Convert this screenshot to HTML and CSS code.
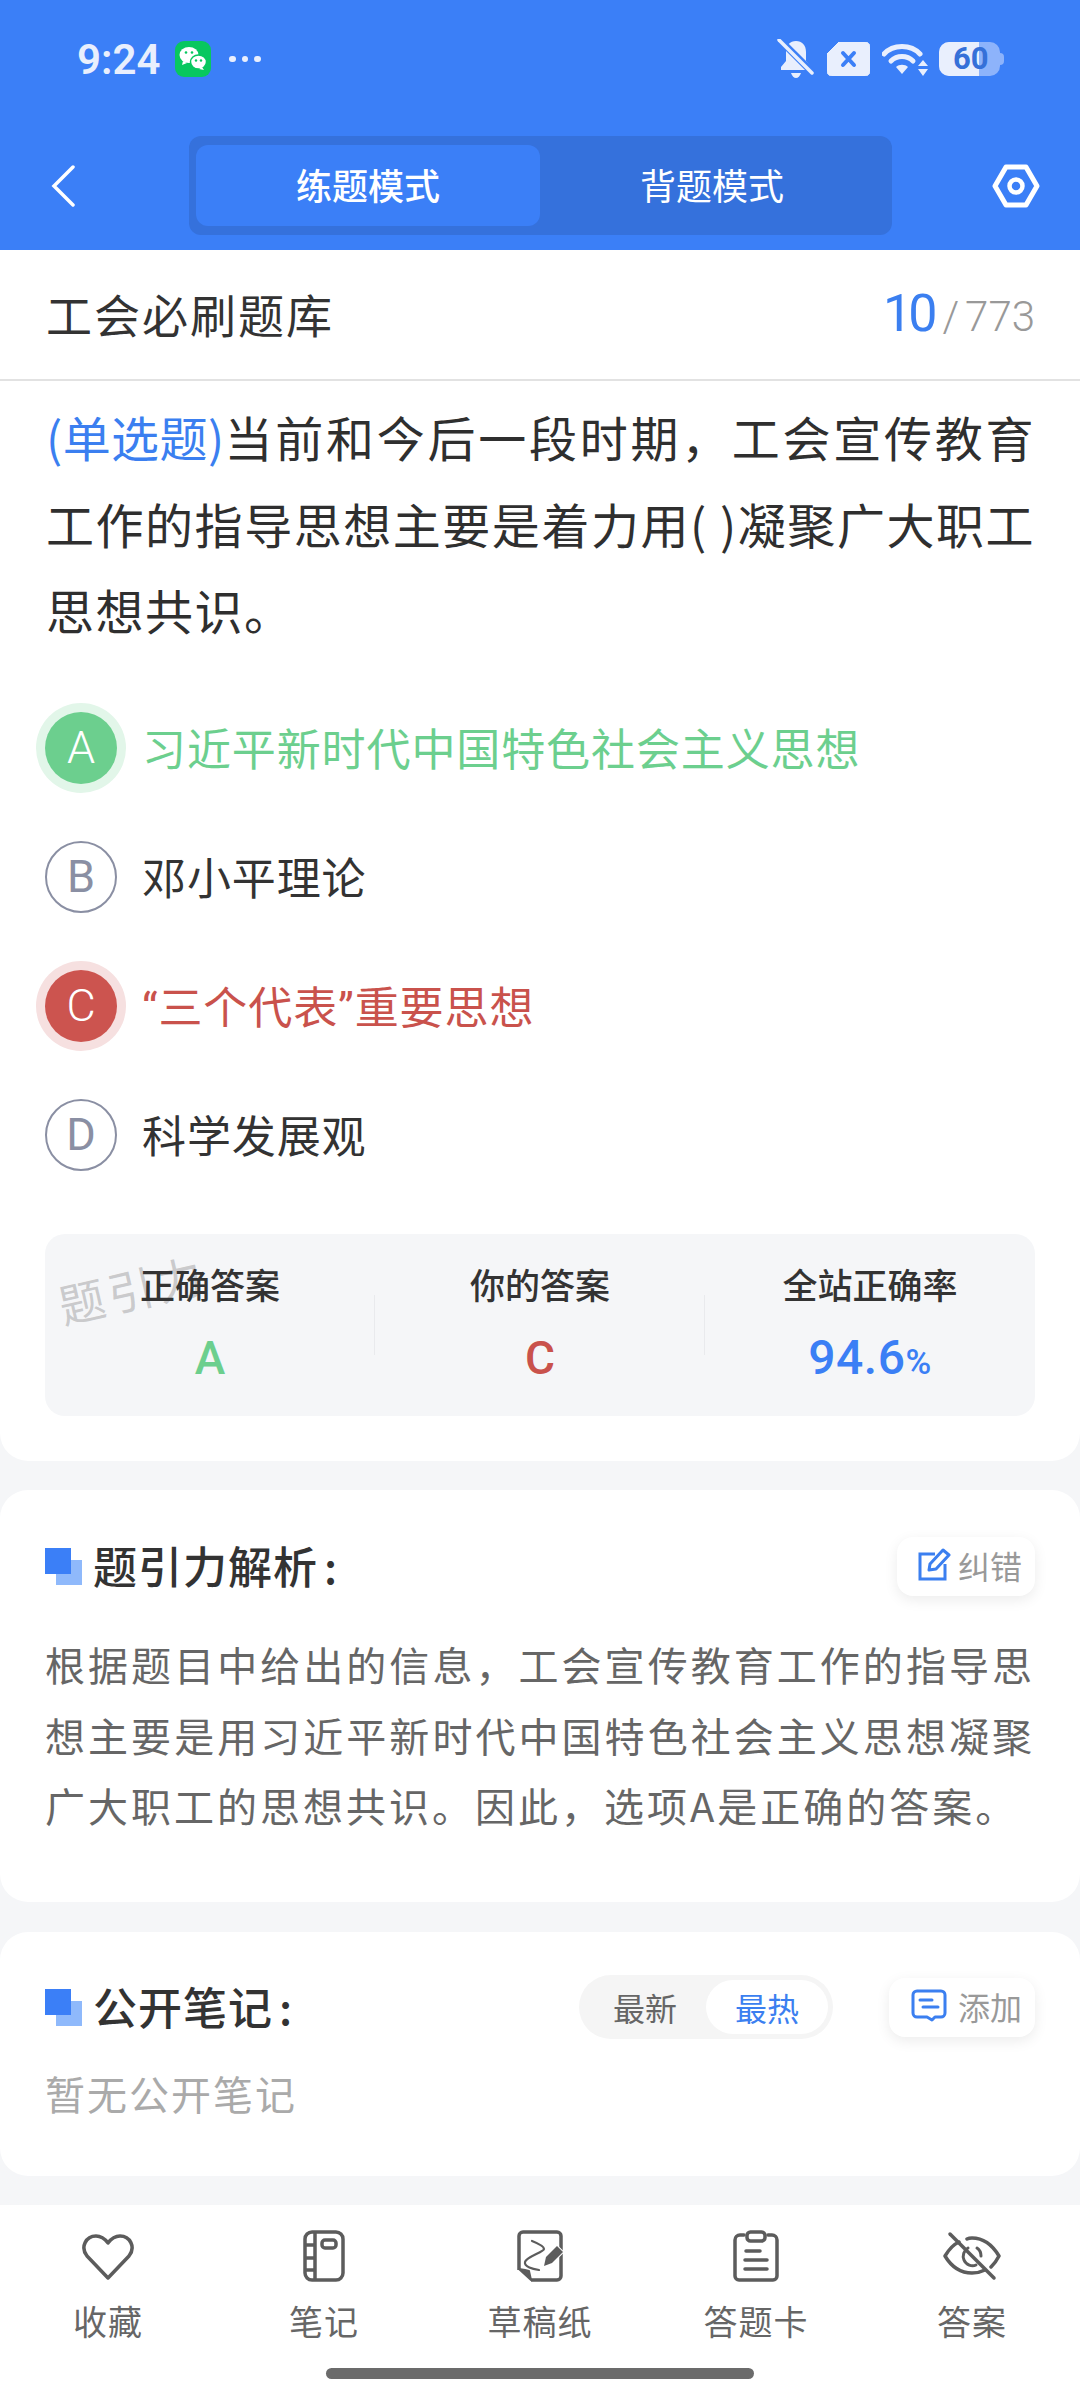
FILE: index.html
```html
<!DOCTYPE html>
<html lang="zh-CN">
  <head>
    <meta charset="utf-8" />
    <title>工会必刷题库</title>
    <link rel="stylesheet" href="styles.css">
  </head>
  <body>
    <header class="top">
      <div class="status">
        <div class="status-left">
          <span class="time">9:24</span>
          <svg class="wechat" width="36" height="36" viewBox="0 0 36 36">
            <rect width="36" height="36" rx="9" fill="#08c75f"/>
            <ellipse cx="14" cy="14" rx="9.500" ry="8" fill="#fff"/>
            <path d="M8 20l-1 4 5-2z" fill="#fff"/>
            <ellipse cx="23.500" cy="21" rx="8" ry="7" fill="#fff" stroke="#08c75f" stroke-width="1.500"/>
            <path d="M27 26l2 3-5-1z" fill="#fff"/>
            <circle cx="11" cy="11.500" r="1.300" fill="#08c75f"/><circle cx="17" cy="11.500" r="1.300" fill="#08c75f"/>
            <circle cx="21" cy="19.500" r="1.200" fill="#08c75f"/><circle cx="26" cy="19.500" r="1.200" fill="#08c75f"/>
          </svg>
          <span class="dots"><i></i><i></i><i></i></span>
        </div>
        <div class="status-right">
          <svg width="38" height="40" viewBox="0 0 38 40">
            <path d="M19 2c6 0 10 4 10 11v9l5 6v3H4v-3l5-6v-9c0-7 4-11 10-11z" fill="#e9effd"/>
            <path d="M14 34h10c-1 3-3 5-5 5s-4-2-5-5z" fill="#e9effd"/>
            <path d="M2 0l34 34" stroke="#3b7ff7" stroke-width="7"/>
            <path d="M2 1l33 33" stroke="#e9effd" stroke-width="3.500" stroke-linecap="round"/>
          </svg>
          <svg width="43" height="34" viewBox="0 0 43 34">
            <path d="M12 0h26a5 5 0 0 1 5 5v24a5 5 0 0 1-5 5H5a5 5 0 0 1-5-5V12z" fill="#e9effd" stroke="#e9effd" stroke-linejoin="round"/>
            <path d="M16 11l11 12M27 11L16 23" stroke="#3b7ff7" stroke-width="4" stroke-linecap="round"/>
          </svg>
          <svg width="46" height="34" viewBox="0 0 46 34">
            <path d="M2 12C11 2 29 2 38 12" fill="none" stroke="#e9effd" stroke-width="5" stroke-linecap="round"/>
            <path d="M9 19c6-6 16-6 22 0" fill="none" stroke="#e9effd" stroke-width="5" stroke-linecap="round"/>
            <path d="M14 25c3-3 9-3 12 0l-6 7z" fill="#e9effd"/>
            <path d="M41 18l5 6H36zM41 34l-5-7h10z" fill="#e9effd"/>
          </svg>
          <div class="battery">
            <div class="battery-fill"></div>
            <span class="battery-num">60</span>
          </div>
        </div>
      </div>
      <nav class="nav">
        <svg class="back" width="24" height="42" viewBox="0 0 24 42"><path d="M22 2L3 21l19 19" fill="none" stroke="#fff" stroke-width="3.500" stroke-linecap="round"/></svg>
        <div class="tabs">
          <div class="tab tab-on">练题模式</div>
          <div class="tab">背题模式</div>
        </div>
        <svg class="gear" width="48" height="44" viewBox="0 0 48 44">
          <path d="M14 3h20l11 19-11 19H14L3 22z" fill="none" stroke="#fff" stroke-width="5" stroke-linejoin="round"/>
          <circle cx="24" cy="22" r="6.500" fill="none" stroke="#fff" stroke-width="4.500"/>
        </svg>
      </nav>
    </header>

    <main class="page">
      <section class="card card-question">
        <div class="titlebar">
          <span class="bank">工会必刷题库</span>
          <span class="count"><b>10</b><em>/</em>773</span>
        </div>
        <p class="question"><span class="qtype">(单选题)</span>当前和今后一段时期，工会宣传教育工作的指导思想主要是着力用( )凝聚广大职工思想共识。</p>
        <div class="options">
          <div class="option right"><span class="letter">A</span><span class="option-text">习近平新时代中国特色社会主义思想</span></div>
          <div class="option"><span class="letter">B</span><span class="option-text">邓小平理论</span></div>
          <div class="option wrong"><span class="letter">C</span><span class="option-text">“三个代表”重要思想</span></div>
          <div class="option"><span class="letter">D</span><span class="option-text">科学发展观</span></div>
        </div>
        <div class="stats">
          <div class="watermark">题引力</div>
          <div class="stat"><div class="stat-label">正确答案</div><div class="stat-value green">A</div></div>
          <div class="stat"><div class="stat-label">你的答案</div><div class="stat-value red">C</div></div>
          <div class="stat"><div class="stat-label">全站正确率</div><div class="stat-value blue">94.6<small>%</small></div></div>
        </div>
      </section>

      <section class="card card-analysis">
        <div class="section-head">
          <h3 class="section-title"><span class="mark"></span>题引力解析<span class="colon">:</span></h3>
          <div class="mini-btn mini-fix">
            <svg width="34" height="34" viewBox="0 0 34 34" fill="none" stroke="#3b7ff0" stroke-width="3">
              <path d="M18 6H3v25h25V16"/>
              <path d="M13 16L26 2l6 5-13 14-7 1z" stroke-linejoin="round"/>
            </svg>
            <span>纠错</span>
          </div>
        </div>
        <p class="analysis">根据题目中给出的信息，工会宣传教育工作的指导思想主要是用习近平新时代中国特色社会主义思想凝聚广大职工的思想共识。因此，选项A是正确的答案。</p>
      </section>

      <section class="card card-notes">
        <div class="section-head">
          <h3 class="section-title"><span class="mark"></span>公开笔记<span class="colon">:</span></h3>
          <div class="note-tools">
            <div class="seg">
              <span class="seg-item">最新</span>
              <span class="seg-item seg-on">最热</span>
            </div>
            <div class="mini-btn mini-add">
              <svg width="36" height="34" viewBox="0 0 36 34" fill="none" stroke="#3b7ff0" stroke-width="3">
                <path d="M6 2h24a4 4 0 0 1 4 4v18a4 4 0 0 1-4 4h-6l-3 3-5-3H6a4 4 0 0 1-4-4V6a4 4 0 0 1 4-4z" stroke-linejoin="round"/>
                <path d="M9 11h12M12 18h15" stroke-linecap="round"/>
              </svg>
              <span>添加</span>
            </div>
          </div>
        </div>
        <p class="empty">暂无公开笔记</p>
      </section>
    </main>

    <footer class="bottom">
      <div class="tools">
        <div class="tool">
          <svg width="54" height="52" viewBox="0 0 54 52" fill="none" stroke="#5c5c5c" stroke-width="3.500" stroke-linejoin="round">
            <path d="M27 48L6 26C-1 17 5 6 15 6c5 0 9 3 12 7 3-4 7-7 12-7 10 0 16 11 9 20z"/>
          </svg>
          <span>收藏</span>
        </div>
        <div class="tool">
          <svg width="42" height="52" viewBox="0 0 42 52" fill="none" stroke="#5c5c5c" stroke-width="3.500">
            <rect x="2" y="2" width="38" height="48" rx="7"/>
            <path d="M12 2v48M2 15h10M2 28h10M2 40h10"/>
            <rect x="19" y="10" width="14" height="8" rx="3"/>
          </svg>
          <span>笔记</span>
        </div>
        <div class="tool">
          <svg width="46" height="52" viewBox="0 0 46 52" fill="none" stroke="#5c5c5c" stroke-width="3.500" stroke-linejoin="round">
            <path d="M14 50h26a4 4 0 0 0 4-4V6a4 4 0 0 0-4-4H6a4 4 0 0 0-4 4v34"/>
            <path d="M2 39l6 1 4 1 2 9z" fill="#5c5c5c" stroke-width="2"/>
            <path d="M15 11c5 2 12 5 12 8s-18 8-19 13 8 7 14 8" stroke-width="2.200" stroke-linecap="round"/>
            <path d="M27 36l2-9L40 16l6 6-11 11z" fill="#5c5c5c" stroke="#fff" stroke-width="2" paint-order="stroke"/>
          </svg>
          <span>草稿纸</span>
        </div>
        <div class="tool">
          <svg width="46" height="52" viewBox="0 0 46 52" fill="none" stroke="#5c5c5c" stroke-width="3.500" stroke-linecap="round" stroke-linejoin="round">
            <path d="M11 5H7a5 5 0 0 0-5 5v36a4 4 0 0 0 4 4h34a4 4 0 0 0 4-4V10a5 5 0 0 0-5-5h-4"/>
            <rect x="14" y="2" width="18" height="9" rx="3.500"/>
            <path d="M13 21h14M12 30h22M12 39h22"/>
          </svg>
          <span>答题卡</span>
        </div>
        <div class="tool">
          <svg width="58" height="52" viewBox="0 -3 58 52" fill="none" stroke="#5c5c5c" stroke-width="3.500" stroke-linecap="round" stroke-linejoin="round">
            <path d="M16 9C9 12 5 18 2 23c6 10 15 17 27 17 5 0 9-1 13-3M24 6c2-1 3-1 5-1 12 0 21 8 27 18-2 4-5 8-8 11"/>
            <path d="M25 15c-4 2-6 8-4 12 2 5 8 7 12 5M34 15c3 2 4 5 4 8" stroke-width="3"/>
            <path d="M7 1l44 44"/>
          </svg>
          <span>答案</span>
        </div>
      </div>
      <div class="home-bar"></div>
    </footer>
  </body>
</html>
```

FILE: styles.css
```css
* { box-sizing: border-box; }
html, body {
  margin: 0;
  padding: 0;
}
body {
  width: 1080px;
  height: 2400px;
  overflow: hidden;
  display: flex;
  flex-direction: column;
  background: #f5f6f8;
  font-family: "Noto Sans CJK SC", "Noto Sans", sans-serif;
  color: #333;
}
p, h3 { margin: 0; }

/* blue header */
.top {
  height: 250px;
  background: #3b7ff7;
  flex: none;
}
.status {
  height: 136px;
  padding: 38px 76px 0 77px;
  display: flex;
  justify-content: space-between;
  align-items: flex-start;
}
.status-left {
  display: flex;
  align-items: center;
  height: 42px;
}
.time {
  font-family: Roboto, sans-serif;
  font-weight: 600;
  font-size: 42px;
  color: #e9effd;
  width: 98px;
}
.wechat { flex: none; }
.dots {
  display: flex;
  gap: 6px;
  margin-left: 18px;
}
.dots i {
  width: 6.500px;
  height: 6.500px;
  border-radius: 50%;
  background: #e9effd;
}
.status-right {
  display: flex;
  align-items: center;
  gap: 12px;
  height: 42px;
}
.battery {
  position: relative;
  width: 61px;
  height: 34px;
  margin-right: 4px;
  border-radius: 10px;
  background: #8db3fb;
  margin-left: -1px;
}
.battery::after {
  content: "";
  position: absolute;
  right: -4px;
  top: 11px;
  width: 4px;
  height: 12px;
  border-radius: 0 4px 4px 0;
  background: #8db3fb;
}
.battery-fill {
  width: 40px;
  height: 34px;
  border-radius: 10px 0 0 10px;
  background: #e9effd;
}
.battery-num {
  position: absolute;
  left: 14px;
  top: 0;
  line-height: 34px;
  font-family: Roboto, sans-serif;
  font-weight: 700;
  font-size: 31px;
  color: #3570d8;
}
.nav {
  display: flex;
  align-items: center;
  height: 99px;
  padding-left: 51px;
}
.back { flex: none; }
.tabs {
  width: 703px;
  height: 99px;
  margin-left: 114px;
  padding: 9px 7px;
  display: flex;
  background: #3571dc;
  border-radius: 12px;
}
.tab {
  width: 344px;
  height: 81px;
  border-radius: 12px;
  text-align: center;
  font-size: 36px;
  line-height: 79px;
  color: #fff;
}
.tab-on {
  background: #3b7ff7;
  font-weight: 500;
}
.gear {
  flex: none;
  margin-left: 100px;
}

/* cards */
.page {
  flex: 1;
  display: flex;
  flex-direction: column;
  gap: 29px;
}
.card {
  background: #fff;
  border-radius: 0 0 28px 28px;
}
.card-analysis, .card-notes {
  border-radius: 28px;
  padding: 46px 45px 0;
}
.card-analysis { height: 412px; }
.card-notes {
  height: 244px;
  margin-top: 1px;
  padding-top: 45px;
}

.titlebar {
  height: 131px;
  padding: 0 45px 3px 46px;
  display: flex;
  justify-content: space-between;
  align-items: center;
  border-bottom: 2px solid #e2e2e2;
}
.bank {
  font-size: 46px;
  letter-spacing: 2px;
  color: #333;
}
.count {
  font-family: Roboto, sans-serif;
  font-weight: 300;
  font-size: 42px;
  color: #999;
  display: flex;
  align-items: baseline;
}
.count b {
  font-weight: 400;
  font-size: 52px;
  letter-spacing: -4px;
  color: #3b7ff0;
}
.count em {
  font-style: normal;
  margin: 0 6px 0 9px;
}
.question {
  padding: 12px 45px 0 46px;
  font-size: 48px;
  line-height: 86.500px;
  letter-spacing: 1.500px;
  text-align: justify;
  color: #2f2f2f;
}
.qtype {
  color: #3b7ff0;
  letter-spacing: -0.800px;
}
.options { margin-top: 31px; }
.option {
  height: 129px;
  padding-left: 45px;
  display: flex;
  align-items: center;
  gap: 25px;
  font-family: Roboto, "Noto Sans CJK SC", sans-serif;
  font-size: 44px;
  letter-spacing: 0.900px;
  color: #333;
}
.option-text { margin-bottom: 3px; }
.letter {
  flex: none;
  width: 72px;
  height: 72px;
  border-radius: 50%;
  border: 2px solid #8a8fa3;
  color: #8a8fa3;
  font-family: Roboto, sans-serif;
  font-weight: 400;
  font-size: 45px;
  letter-spacing: 0;
  line-height: 68px;
  text-align: center;
}
.right { color: #6ccf8e; }
.wrong { color: #c9524c; }
.right .letter, .wrong .letter {
  color: #fff;
  border: none;
  font-weight: 300;
  line-height: 72px;
}
.right .letter {
  background: #6ccf8e;
  box-shadow: 0 0 0 9px #e2f6e9;
}
.wrong .letter {
  background: #cc544f;
  box-shadow: 0 0 0 9px #f6e0e0;
}

.stats {
  position: relative;
  margin: 34.500px 45px 45px;
  height: 182px;
  display: flex;
  background: #f5f6f8;
  border-radius: 20px;
}
.stat {
  position: relative;
  flex: 1;
  text-align: center;
  padding-top: 25px;
}
.stat + .stat::before {
  content: "";
  position: absolute;
  left: -1px;
  top: 61px;
  height: 60px;
  border-left: 1px solid #e9eaed;
}
.stat-label {
  font-size: 35px;
  font-weight: 500;
  line-height: 50px;
  color: #333;
}
.stat-value {
  margin-top: 24px;
  font-family: Roboto, sans-serif;
  font-size: 46px;
  font-weight: 500;
  line-height: 50px;
}
.stat-value small {
  font-size: 35px;
}
.green { color: #6ccf8e; }
.red { color: #c9524c; }
.blue {
  color: #3b7ff5;
  font-size: 48px;
  letter-spacing: 0.500px;
}
.watermark {
  position: absolute;
  left: 12px;
  top: 24px;
  transform: rotate(-13deg);
  font-size: 46px;
  letter-spacing: 4px;
  line-height: 60px;
  color: rgba(120, 120, 120, 0.35);
}

.section-head {
  display: flex;
  justify-content: space-between;
  align-items: center;
  height: 60px;
}
.section-title {
  position: relative;
  isolation: isolate;
  padding-left: 48px;
  margin-top: -2px;
  font-size: 44px;
  font-weight: 500;
  letter-spacing: 1px;
  color: #333;
}
.colon { margin-left: 6px; }
.mark {
  position: absolute;
  left: 0;
  top: 50%;
  margin-top: -17px;
  width: 26px;
  height: 26px;
  background: #3b7ff7;
}
.mark::after {
  content: "";
  position: absolute;
  left: 11px;
  top: 12px;
  width: 26px;
  height: 25px;
  background: #8fb9fb;
  z-index: -1;
}
.mini-btn {
  height: 59px;
  padding: 0 13px 2px 20px;
  display: flex;
  align-items: center;
  justify-content: space-between;
  background: #fff;
  border-radius: 16px;
  box-shadow: 0 4px 14px rgba(0, 0, 0, 0.08);
  font-size: 32px;
  color: #999;
}
.mini-fix { width: 138px; }
.mini-add {
  width: 146px;
  padding-left: 22px;
}
.analysis {
  margin-top: 33px;
  font-size: 40px;
  line-height: 70.500px;
  letter-spacing: 3px;
  text-align: justify;
  color: #666;
}
.note-tools {
  display: flex;
  align-items: center;
  gap: 56px;
}
.seg {
  width: 254px;
  height: 64px;
  padding: 5px;
  display: flex;
  justify-content: space-between;
  background: #f5f5f5;
  border-radius: 32px;
  font-size: 32px;
}
.seg-item {
  width: 122px;
  height: 54px;
  line-height: 54px;
  text-align: center;
  color: #666;
}
.seg-on {
  background: #fff;
  border-radius: 27px;
  color: #3b7ff0;
}
.empty {
  margin-top: 26px;
  font-size: 40px;
  line-height: 60px;
  letter-spacing: 2px;
  color: #aaa;
}

/* bottom toolbar */
.bottom {
  height: 195px;
  flex: none;
  background: #fff;
  margin-top: 29px;
  padding-top: 25px;
}
.tools {
  display: flex;
}
.tool {
  flex: 1;
  display: flex;
  flex-direction: column;
  align-items: center;
  gap: 17px;
  font-size: 34px;
  letter-spacing: 1px;
  line-height: 44px;
  color: #666;
}
.home-bar {
  width: 428px;
  height: 11px;
  margin: 25px auto 0;
  background: #6b6b6b;
  border-radius: 6px;
}
```
